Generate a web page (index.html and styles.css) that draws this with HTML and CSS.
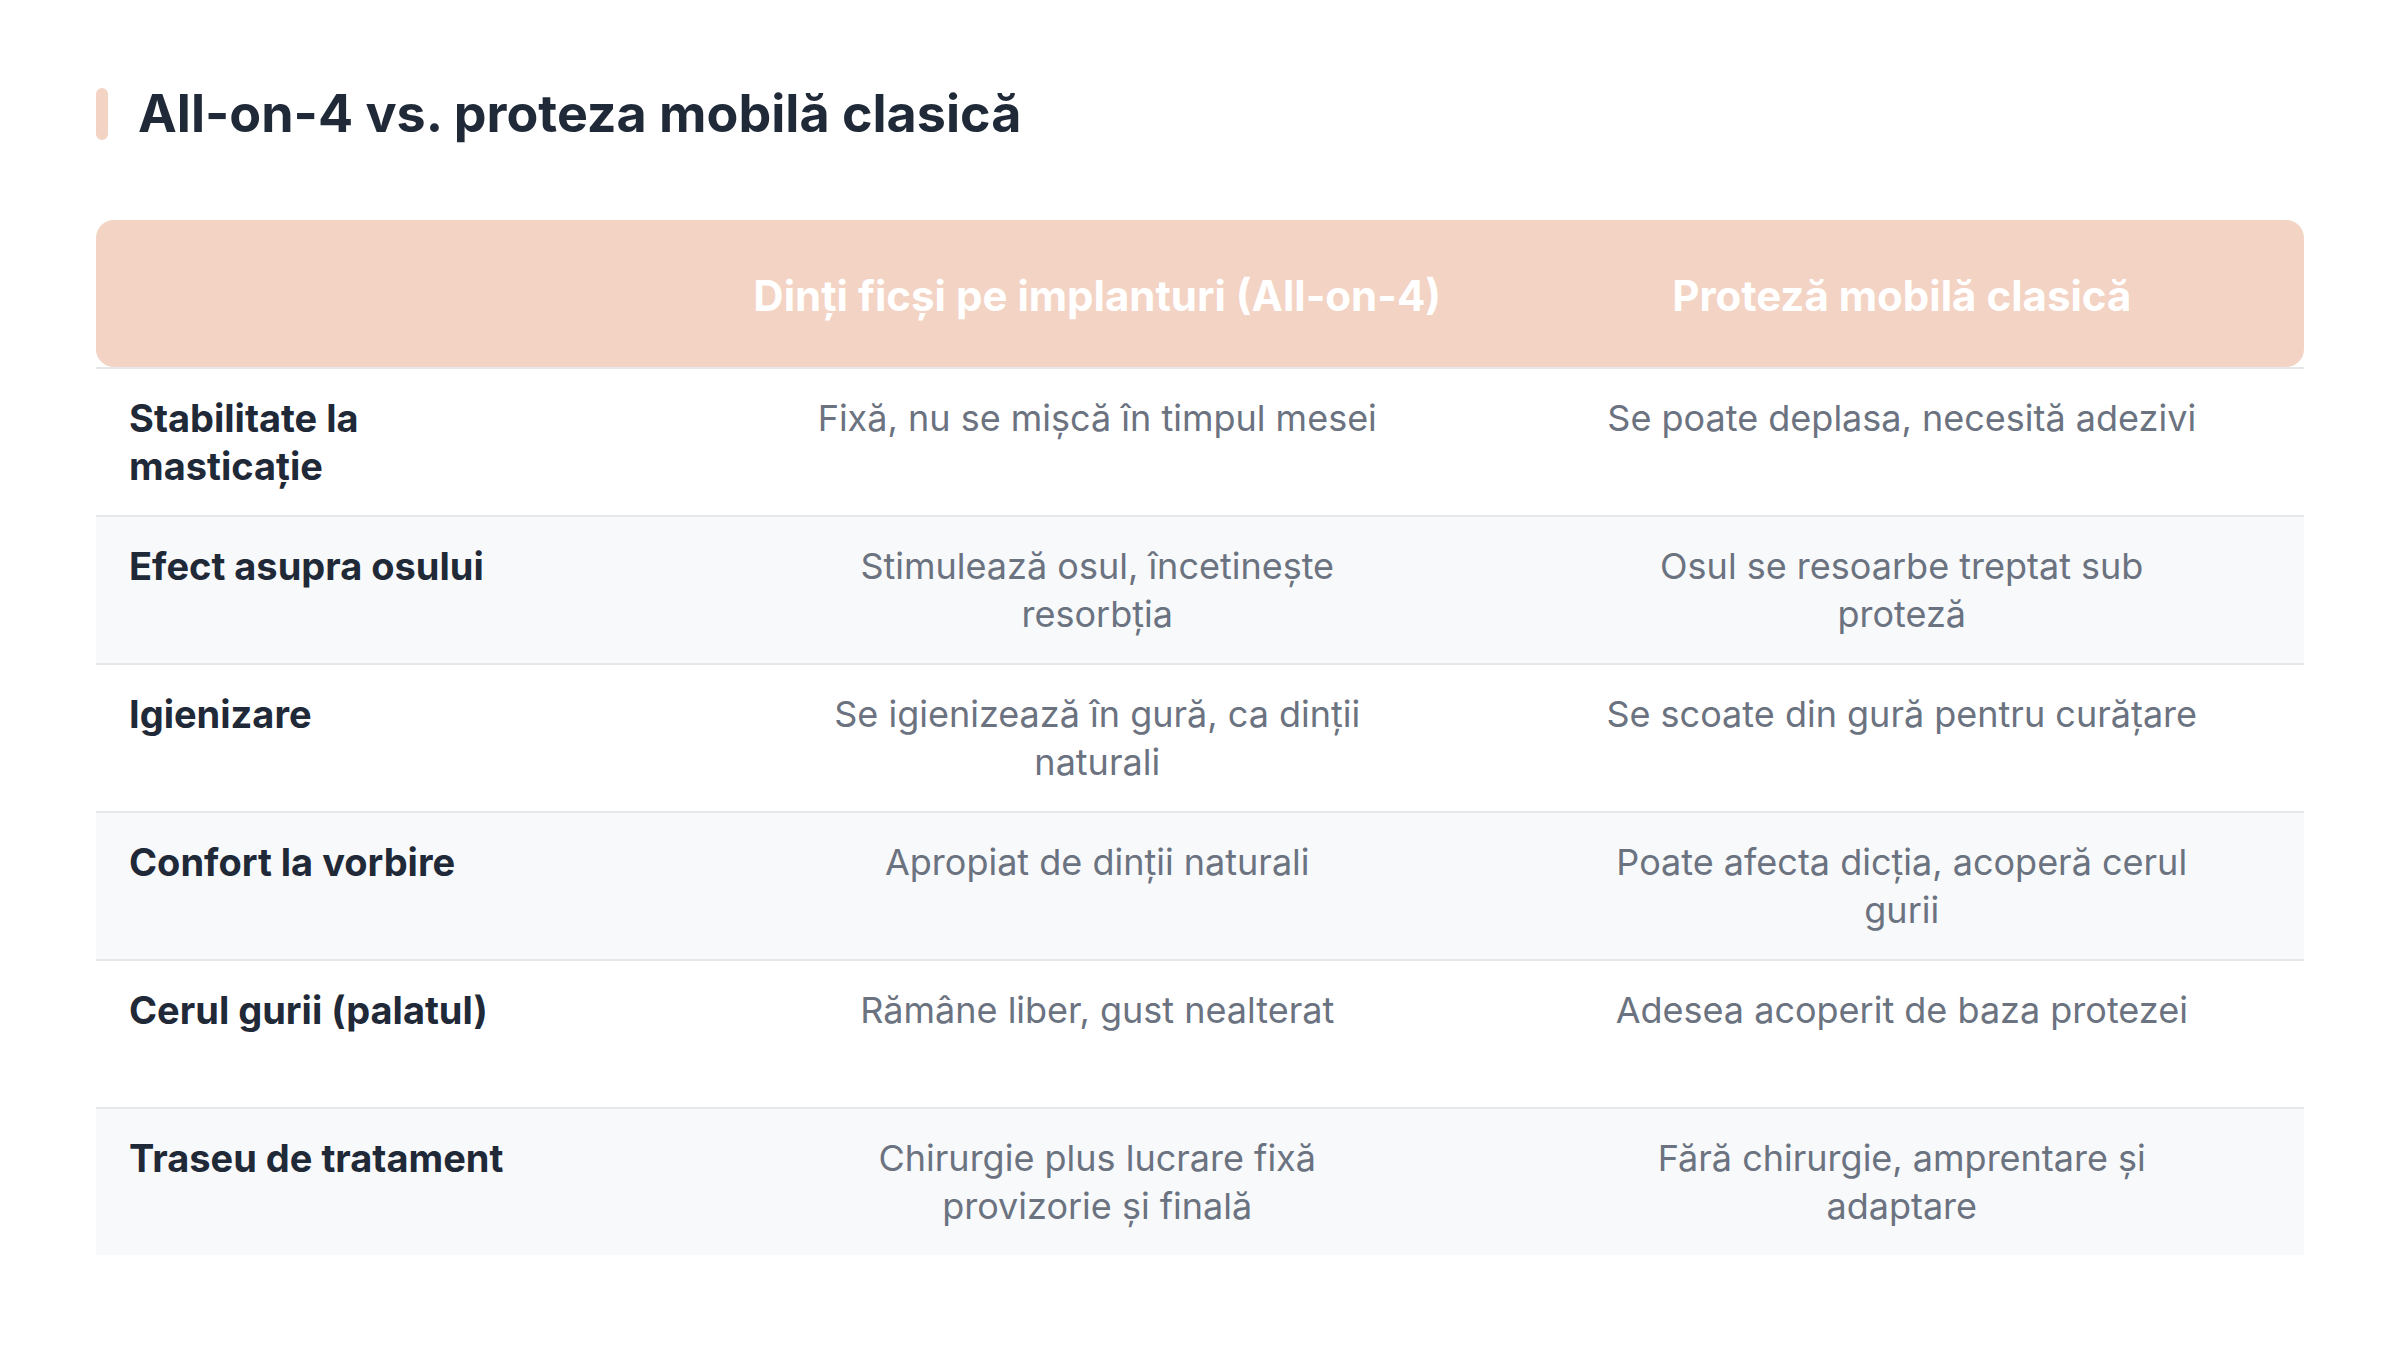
FILE: index.html
```html
<!DOCTYPE html>
<html lang="ro">
<head>
<meta charset="utf-8">
<title>All-on-4 vs. proteza mobilă clasică</title>
<link rel="stylesheet" href="styles.css">
</head>
<body>
<main class="page">
  <div class="heading">
    <span class="accent"></span>
    <h1 class="title">All-on-4 vs. proteza mobilă clasică</h1>
  </div>
  <div class="table">
    <div class="head">
      <div class="hcell"></div>
      <div class="hcell">Dinți ficși pe implanturi (All-on-4)</div>
      <div class="hcell">Proteză mobilă clasică</div>
    </div>
    <div class="row">
      <div class="label"><span class="ltext">Stabilitate la masticație</span></div>
      <div class="cell"><span class="ctext">Fixă, nu se mișcă în timpul mesei</span></div>
      <div class="cell"><span class="ctext">Se poate deplasa, necesită adezivi</span></div>
    </div>
    <div class="row alt">
      <div class="label"><span class="ltext">Efect asupra osului</span></div>
      <div class="cell"><span class="ctext">Stimulează osul, încetinește resorbția</span></div>
      <div class="cell"><span class="ctext">Osul se resoarbe treptat sub proteză</span></div>
    </div>
    <div class="row">
      <div class="label"><span class="ltext">Igienizare</span></div>
      <div class="cell"><span class="ctext">Se igienizează în gură, ca dinții naturali</span></div>
      <div class="cell"><span class="ctext">Se scoate din gură pentru curățare</span></div>
    </div>
    <div class="row alt">
      <div class="label"><span class="ltext">Confort la vorbire</span></div>
      <div class="cell"><span class="ctext">Apropiat de dinții naturali</span></div>
      <div class="cell"><span class="ctext">Poate afecta dicția, acoperă cerul gurii</span></div>
    </div>
    <div class="row">
      <div class="label"><span class="ltext">Cerul gurii (palatul)</span></div>
      <div class="cell"><span class="ctext">Rămâne liber, gust nealterat</span></div>
      <div class="cell"><span class="ctext">Adesea acoperit de baza protezei</span></div>
    </div>
    <div class="row alt">
      <div class="label"><span class="ltext">Traseu de tratament</span></div>
      <div class="cell"><span class="ctext">Chirurgie plus lucrare fixă provizorie și finală</span></div>
      <div class="cell"><span class="ctext">Fără chirurgie, amprentare și adaptare</span></div>
    </div>
  </div>
</main>
</body>
</html>
```
FILE: styles.css
```css
* { box-sizing: border-box; }
html, body { margin: 0; padding: 0; background: #ffffff; }
body {
  font-family: Inter, "Noto Sans", "Liberation Sans", sans-serif;
  color: #1f2937;
}
.page {
  width: 2400px;
  padding: 88px 96px 0 96px;
}
.heading {
  display: flex;
  align-items: center;
  gap: 30px;
  height: 52px;
}
.accent {
  width: 12px;
  height: 52px;
  border-radius: 6px;
  background: #f3d3c4;
  flex: none;
}
.title {
  margin: 0;
  font-size: 52px;
  line-height: 52px;
  font-weight: 700;
  color: #1f2937;
}
.table {
  margin-top: 80px;
  width: 2208px;
}
.head, .row {
  display: grid;
  grid-template-columns: 599px 1fr 1fr;
}
.head {
  height: 147px;
  background: #f3d3c4;
  border-radius: 18px;
  align-items: center;
}
.hcell {
  text-align: center;
  color: #ffffff;
  font-weight: 700;
  font-size: 42px;
  line-height: 52px;
  padding: 4px 32px 0 32px;
}
.row {
  height: 148px;
  border-top: 2px solid #e5e7eb;
  align-items: start;
  background: #ffffff;
}
.row.alt { background: #f8f9fb; }
.label {
  padding: 25px 32px 0 33px;
  font-size: 38px;
  line-height: 48px;
  font-weight: 700;
  color: #1f2937;
}
.ltext { display: block; max-width: 400px; }
.cell {
  padding: 25px 32px 0 32px;
  font-size: 36px;
  line-height: 48px;
  color: #6b7280;
  text-align: center;
  display: flex;
  justify-content: center;
}
.ctext { display: block; max-width: 594px; }
```
